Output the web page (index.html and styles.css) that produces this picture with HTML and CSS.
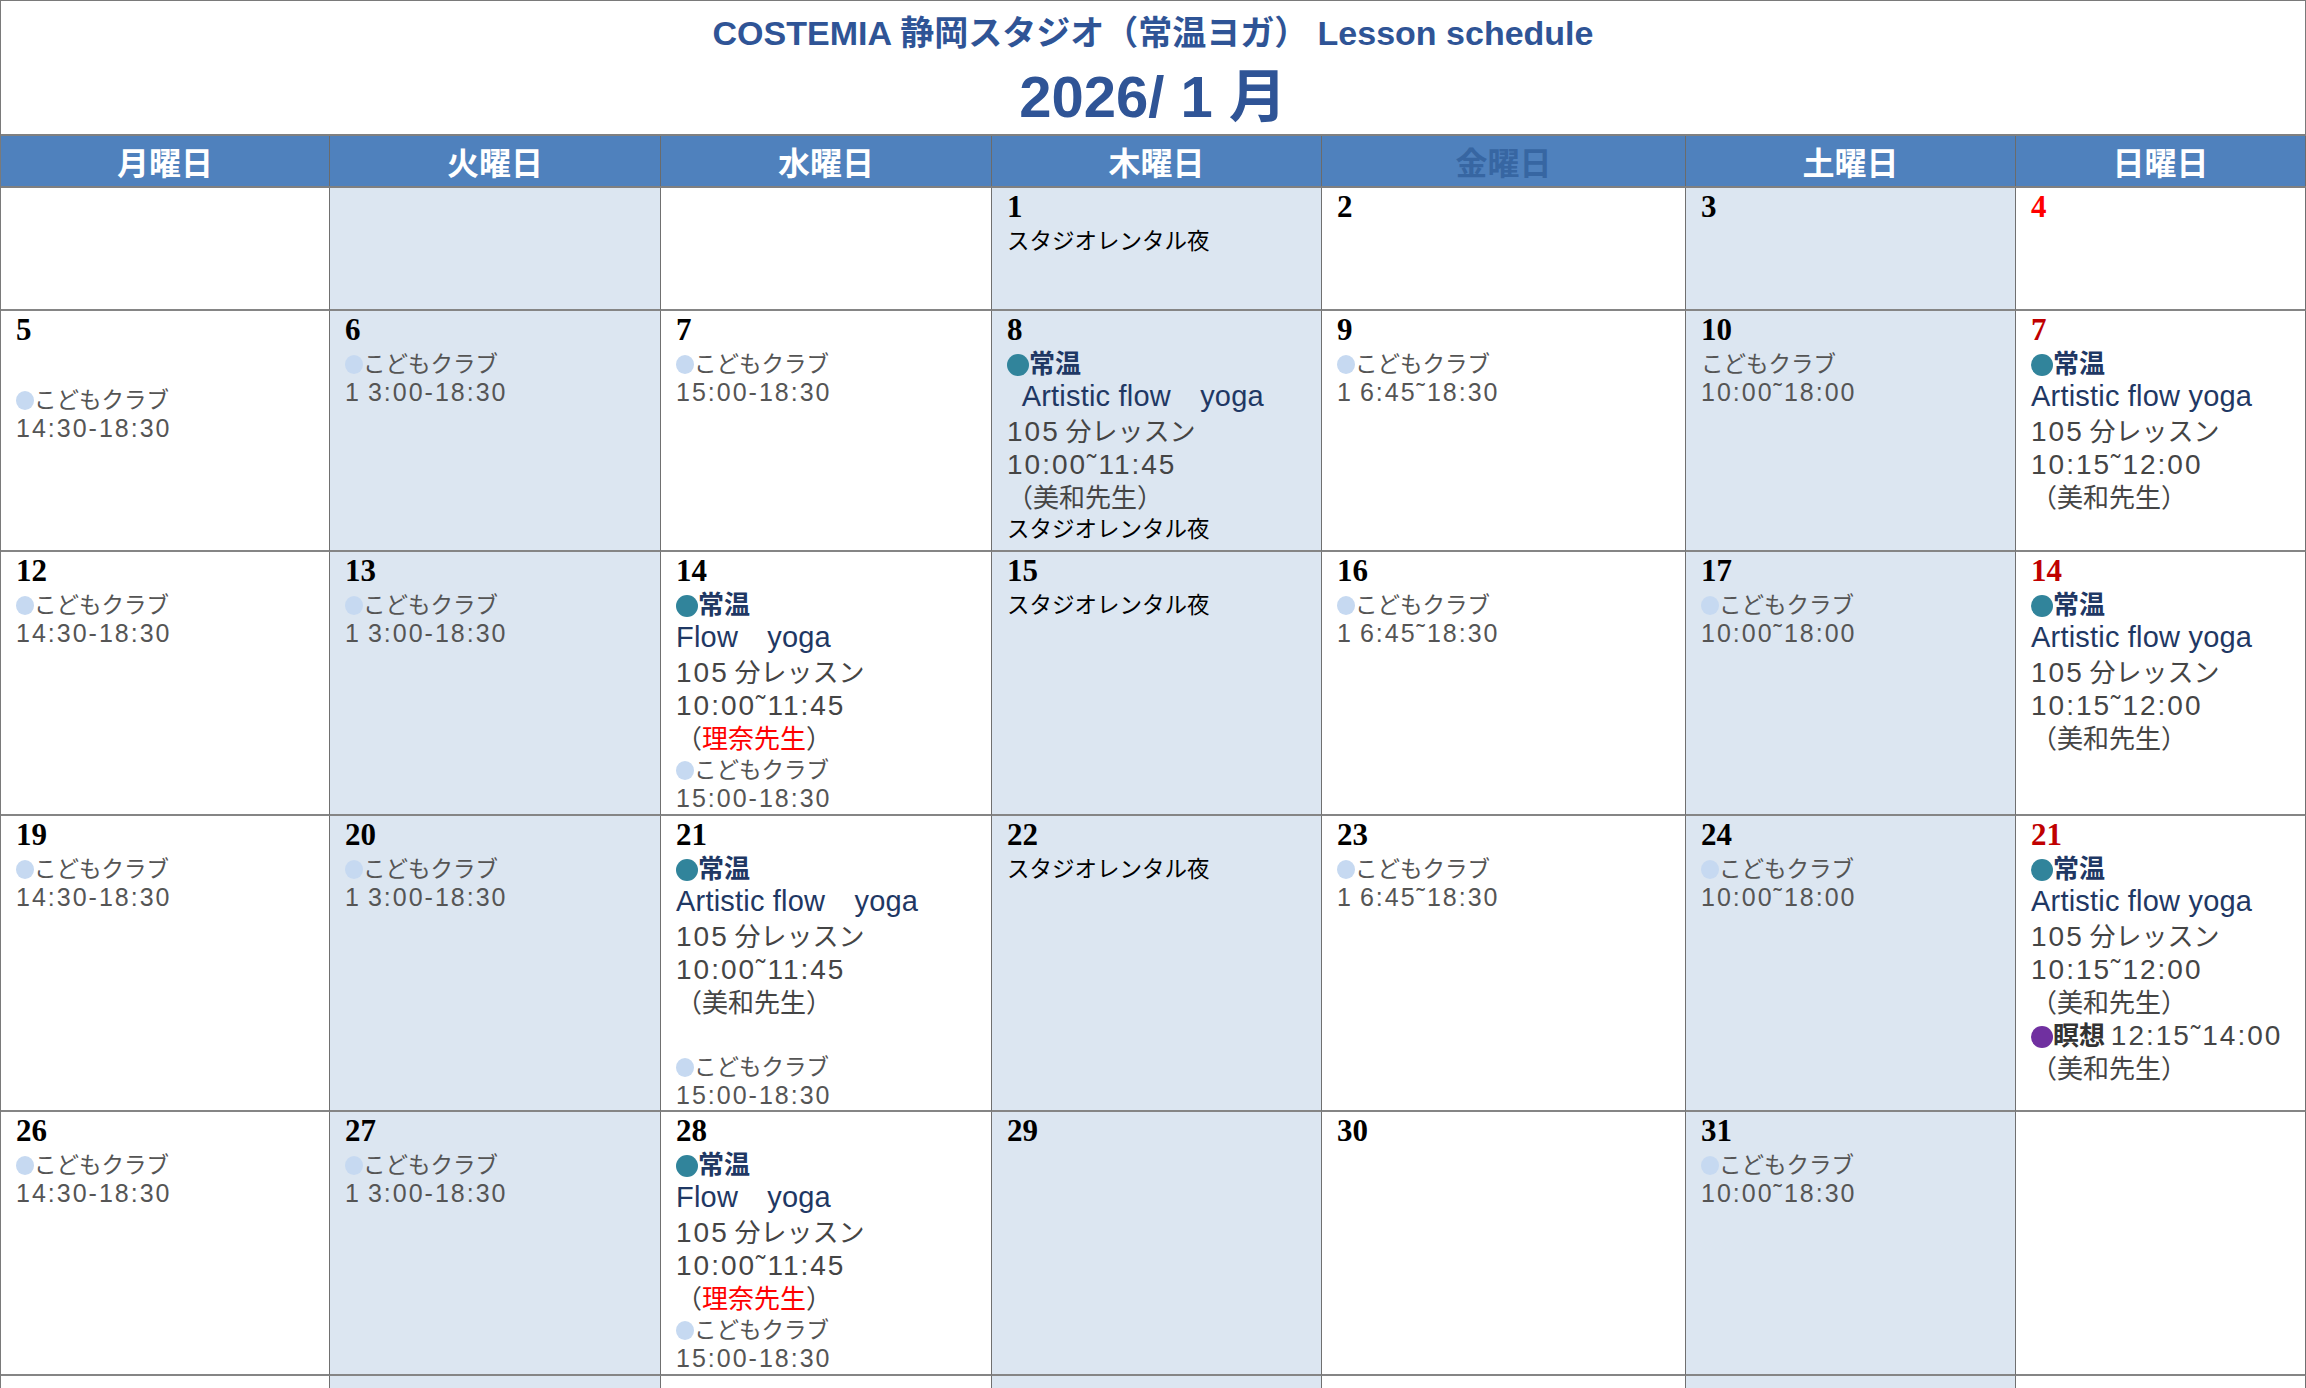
FILE: index.html
```html
<!DOCTYPE html>
<html lang="ja">
<head>
<meta charset="utf-8">
<title>COSTEMIA Lesson schedule</title>
<link rel="stylesheet" href="styles.css">
</head>
<body>
<div class="page">
  <header class="title">
    <div class="t1">COSTEMIA 静岡スタジオ（常温ヨガ） Lesson schedule</div>
    <div class="t2">2026/ 1 月</div>
  </header>
  <div class="cols head">
    <div class="h">月曜日</div>
    <div class="h">火曜日</div>
    <div class="h">水曜日</div>
    <div class="h">木曜日</div>
    <div class="h fri">金曜日</div>
    <div class="h">土曜日</div>
    <div class="h">日曜日</div>
  </div>
  <div class="cols cal">
    <!-- week 1 -->
    <div class="c"></div>
    <div class="c"></div>
    <div class="c"></div>
    <div class="c"><div class="d">1</div><div class="rent">スタジオレンタル夜</div></div>
    <div class="c"><div class="d">2</div></div>
    <div class="c"><div class="d">3</div></div>
    <div class="c"><div class="d sun-b">4</div></div>
    <!-- week 2 -->
    <div class="c"><div class="d">5</div><div class="gap"></div><div class="k"><span class="kdot"></span>こどもクラブ</div><div class="kt">14:30-18:30</div></div>
    <div class="c"><div class="d">6</div><div class="k"><span class="kdot"></span>こどもクラブ</div><div class="kt">1&#8201;3:00-18:30</div></div>
    <div class="c"><div class="d">7</div><div class="k"><span class="kdot"></span>こどもクラブ</div><div class="kt">15:00-18:30</div></div>
    <div class="c"><div class="d">8</div>
      <div class="jo"><span class="dot"></span>常温</div>
      <div class="art">&ensp;Artistic flow　yoga</div>
      <div class="l"><span class="n">105</span> 分レッスン</div>
      <div class="l"><span class="n">10:00˜11:45</span></div>
      <div class="l">（美和先生）</div>
      <div class="rent">スタジオレンタル夜</div>
    </div>
    <div class="c"><div class="d">9</div><div class="k"><span class="kdot"></span>こどもクラブ</div><div class="kt">1&#8201;6:45˜18:30</div></div>
    <div class="c"><div class="d">10</div><div class="k">こどもクラブ</div><div class="kt">10:00˜18:00</div></div>
    <div class="c"><div class="d sun">7</div>
      <div class="jo"><span class="dot"></span>常温</div>
      <div class="art">Artistic flow yoga</div>
      <div class="l"><span class="n">105</span> 分レッスン</div>
      <div class="l"><span class="n">10:15˜12:00</span></div>
      <div class="l">（美和先生）</div>
    </div>
    <!-- week 3 -->
    <div class="c"><div class="d">12</div><div class="k"><span class="kdot"></span>こどもクラブ</div><div class="kt">14:30-18:30</div></div>
    <div class="c"><div class="d">13</div><div class="k"><span class="kdot"></span>こどもクラブ</div><div class="kt">1&#8201;3:00-18:30</div></div>
    <div class="c"><div class="d">14</div>
      <div class="jo"><span class="dot"></span>常温</div>
      <div class="art">Flow　yoga</div>
      <div class="l"><span class="n">105</span> 分レッスン</div>
      <div class="l"><span class="n">10:00˜11:45</span></div>
      <div class="l">（<span class="rt">理奈先生</span>）</div>
      <div class="k"><span class="kdot"></span>こどもクラブ</div><div class="kt">15:00-18:30</div>
    </div>
    <div class="c"><div class="d">15</div><div class="rent">スタジオレンタル夜</div></div>
    <div class="c"><div class="d">16</div><div class="k"><span class="kdot"></span>こどもクラブ</div><div class="kt">1&#8201;6:45˜18:30</div></div>
    <div class="c"><div class="d">17</div><div class="k"><span class="kdot"></span>こどもクラブ</div><div class="kt">10:00˜18:00</div></div>
    <div class="c"><div class="d sun">14</div>
      <div class="jo"><span class="dot"></span>常温</div>
      <div class="art">Artistic flow yoga</div>
      <div class="l"><span class="n">105</span> 分レッスン</div>
      <div class="l"><span class="n">10:15˜12:00</span></div>
      <div class="l">（美和先生）</div>
    </div>
    <!-- week 4 -->
    <div class="c"><div class="d">19</div><div class="k"><span class="kdot"></span>こどもクラブ</div><div class="kt">14:30-18:30</div></div>
    <div class="c"><div class="d">20</div><div class="k"><span class="kdot"></span>こどもクラブ</div><div class="kt">1&#8201;3:00-18:30</div></div>
    <div class="c"><div class="d">21</div>
      <div class="jo"><span class="dot"></span>常温</div>
      <div class="art">Artistic flow　yoga</div>
      <div class="l"><span class="n">105</span> 分レッスン</div>
      <div class="l"><span class="n">10:00˜11:45</span></div>
      <div class="l">（美和先生）</div>
      <div class="l"></div>
      <div class="k"><span class="kdot"></span>こどもクラブ</div><div class="kt">15:00-18:30</div>
    </div>
    <div class="c"><div class="d">22</div><div class="rent">スタジオレンタル夜</div></div>
    <div class="c"><div class="d">23</div><div class="k"><span class="kdot"></span>こどもクラブ</div><div class="kt">1&#8201;6:45˜18:30</div></div>
    <div class="c"><div class="d">24</div><div class="k"><span class="kdot"></span>こどもクラブ</div><div class="kt">10:00˜18:00</div></div>
    <div class="c"><div class="d sun">21</div>
      <div class="jo"><span class="dot"></span>常温</div>
      <div class="art">Artistic flow yoga</div>
      <div class="l"><span class="n">105</span> 分レッスン</div>
      <div class="l"><span class="n">10:15˜12:00</span></div>
      <div class="l">（美和先生）</div>
      <div class="l"><span class="dot purple"></span><b class="med">瞑想</b> <span class="n">12:15˜14:00</span></div>
      <div class="l">（美和先生）</div>
    </div>
    <!-- week 5 -->
    <div class="c"><div class="d">26</div><div class="k"><span class="kdot"></span>こどもクラブ</div><div class="kt">14:30-18:30</div></div>
    <div class="c"><div class="d">27</div><div class="k"><span class="kdot"></span>こどもクラブ</div><div class="kt">1&#8201;3:00-18:30</div></div>
    <div class="c"><div class="d">28</div>
      <div class="jo"><span class="dot"></span>常温</div>
      <div class="art">Flow　yoga</div>
      <div class="l"><span class="n">105</span> 分レッスン</div>
      <div class="l"><span class="n">10:00˜11:45</span></div>
      <div class="l">（<span class="rt">理奈先生</span>）</div>
      <div class="k"><span class="kdot"></span>こどもクラブ</div><div class="kt">15:00-18:30</div>
    </div>
    <div class="c"><div class="d">29</div></div>
    <div class="c"><div class="d">30</div></div>
    <div class="c"><div class="d">31</div><div class="k"><span class="kdot"></span>こどもクラブ</div><div class="kt">10:00˜18:30</div></div>
    <div class="c"></div>
    <!-- week 6 -->
    <div class="c"></div>
    <div class="c"></div>
    <div class="c"></div>
    <div class="c"></div>
    <div class="c"></div>
    <div class="c"></div>
    <div class="c"></div>
  </div>
</div>
</body>
</html>
```

FILE: styles.css
```css
html, body {
  margin: 0;
  padding: 0;
  background: #ffffff;
}

body {
  font-family: "Noto Sans CJK JP", "Liberation Sans", sans-serif;
  overflow: hidden;
}

.page {
  width: 2306px;
  box-sizing: border-box;
  border-left: 1px solid #7a7a7a;
}

.title {
  height: 134px;
  box-sizing: border-box;
  border-top: 1px solid #7a7a7a;
  border-right: 1px solid #7a7a7a;
  padding-top: 12px;
  text-align: center;
  color: #2f5496;
}

.t1 {
  font-family: "Liberation Sans", "Noto Sans CJK JP", sans-serif;
  font-weight: 700;
  font-size: 34px;
  line-height: 40px;
}

.t2 {
  font-family: "Liberation Sans", "Noto Sans CJK JP", sans-serif;
  font-weight: 700;
  font-size: 58px;
  line-height: 64px;
  margin-top: 12px;
}

.cols {
  display: grid;
  grid-template-columns: 329px 331px 331px 330px 364px 330px 290px;
}

.head {
  border-top: 2px solid #808080;
  border-bottom: 2px solid #808080;
  background: #4f81bd;
}

.h {
  height: 50px;
  box-sizing: border-box;
  border-right: 1px solid #6b6b6b;
  text-align: center;
  color: #ffffff;
  font-family: "Noto Sans CJK JP", sans-serif;
  font-weight: 700;
  font-size: 32px;
  line-height: 50px;
}

.h.fri {
  color: #3766a2;
}

.cal {
  grid-template-rows: 123px 241px 264px 296px 264px 100px;
}

.c {
  box-sizing: border-box;
  border-right: 1px solid #707070;
  border-bottom: 2px solid #858585;
  padding: 2px 4px 0 15px;
  overflow: hidden;
  white-space: nowrap;
  color: #454545;
}

.cal > .c:nth-child(7n+2),
.cal > .c:nth-child(7n+4),
.cal > .c:nth-child(7n+6) {
  background: #dce6f1;
}

.d {
  font-family: "Liberation Serif", serif;
  font-weight: 700;
  font-size: 31px;
  line-height: 34px;
  color: #000000;
}

.d.sun {
  color: #c00000;
}

.d.sun-b {
  color: #ff0000;
}

.gap {
  height: 36px;
}

.k {
  font-size: 22.5px;
  line-height: 30px;
  color: #555555;
}

.kt {
  font-family: "Liberation Sans", sans-serif;
  font-size: 25px;
  line-height: 30px;
  letter-spacing: 2px;
  color: #555555;
}

.kdot {
  display: inline-block;
  width: 18px;
  height: 19px;
  border-radius: 50%;
  background: #c6d9f1;
  vertical-align: -2px;
}

.rent {
  font-size: 22.5px;
  line-height: 32px;
  margin-top: -1px;
  color: #000000;
}

.jo {
  font-weight: 700;
  font-size: 26px;
  line-height: 33px;
  margin-top: -2px;
  margin-bottom: 2px;
  color: #1f3864;
}

.dot {
  display: inline-block;
  width: 22px;
  height: 22px;
  border-radius: 50%;
  background: #31849b;
  vertical-align: -3px;
}

.dot.purple {
  background: #7030a0;
}

.art {
  font-family: "Liberation Sans", "Noto Sans CJK JP", sans-serif;
  font-size: 29px;
  line-height: 33px;
  letter-spacing: 0.2px;
  color: #1f3864;
}

.l {
  font-size: 26px;
  line-height: 33px;
  height: 33px;
  color: #454545;
}

.n {
  font-family: "Liberation Sans", sans-serif;
  font-size: 28px;
  letter-spacing: 2px;
}

.rt {
  color: #ff0000;
}

.med {
  font-size: 26px;
  font-weight: 700;
  color: #333333;
}
```
